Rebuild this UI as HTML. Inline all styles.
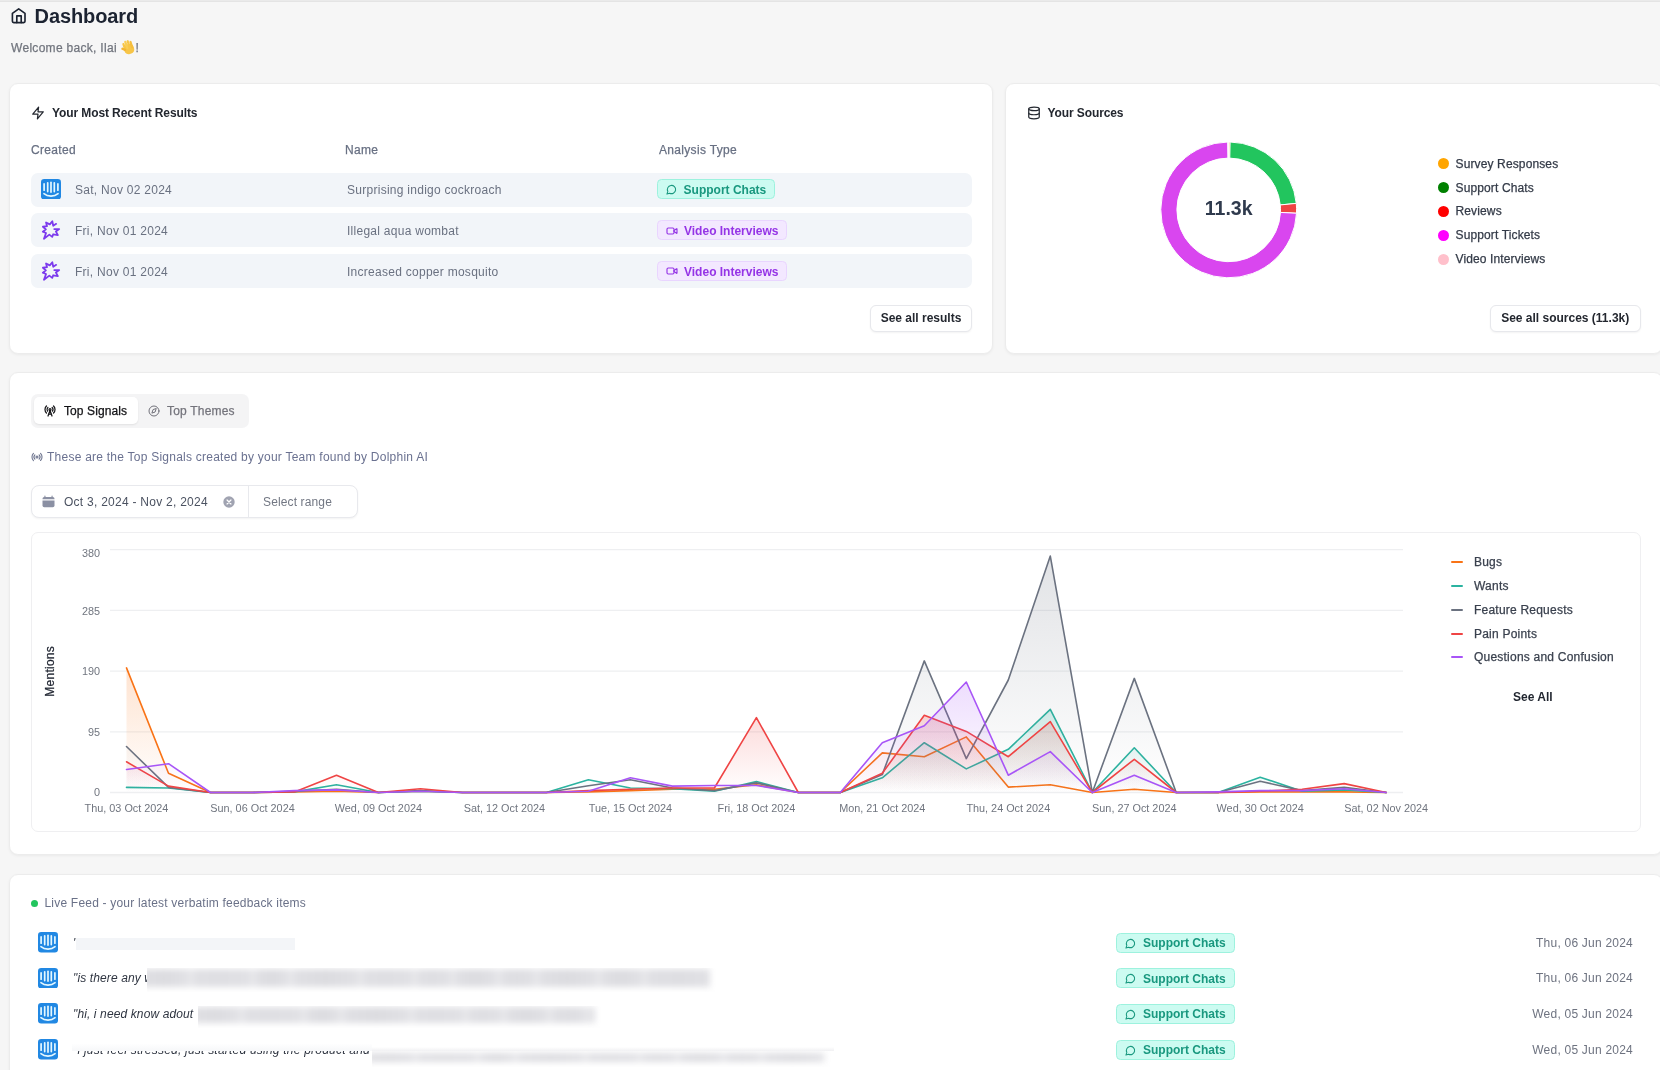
<!DOCTYPE html>
<html lang="en">
<head>
<meta charset="utf-8">
<title>Dashboard</title>
<style>
*{box-sizing:border-box;margin:0;padding:0}
html,body{width:1660px;height:1070px;overflow:hidden}
body{background:#f6f6f6;font-family:"Liberation Sans",Arial,sans-serif;font-size:12px;color:#374151;position:relative}
#app{position:absolute;left:0;top:0;width:1660px;height:1070px;overflow:hidden;will-change:transform}
.abs{position:absolute;white-space:nowrap}
.topline{position:absolute;left:0;top:0;width:1660px;height:1.800px;background:linear-gradient(#ededed,#e1e1e1)}
.card{position:absolute;background:#fff;border:1px solid #ececec;border-radius:9px;box-shadow:0 1px 3px rgba(0,0,0,.05)}
.med{-webkit-text-stroke:.25px currentColor}
.h1{left:34.600px;top:4px;font-size:20px;font-weight:700;color:#1c2331;letter-spacing:-.1px;line-height:24px}
.sub{left:11px;top:40px;font-size:12px;color:#71757e;letter-spacing:.3px;line-height:16px}
.ctitle{font-size:12px;font-weight:700;color:#23272f;line-height:16px;letter-spacing:-.1px}
.th{font-size:12px;color:#687083;line-height:16px;letter-spacing:.32px}
.row{position:absolute;left:20px;width:941px;height:34px;background:#f2f5f9;border-radius:7px}
.cell{position:absolute;top:9.1px;font-size:12px;line-height:16px;color:#6a7181;letter-spacing:.27px;white-space:nowrap}
.badge{position:absolute;height:20px;border-radius:4.5px;border:1px solid;font-weight:700;font-size:12px;line-height:18px;white-space:nowrap}
.badge span{position:absolute;left:26px;top:.6px}
.badge svg{position:absolute}
.b-teal{background:#ccfbf1;border-color:#9df2de;color:#19987f;width:118.500px}
.b-purple{background:#f3e8ff;border-color:#e9d5ff;color:#9534e6;width:130px}
.btn{position:absolute;height:27px;background:#fff;border:1px solid #e7e8ec;border-radius:6px;box-shadow:0 1px 2px rgba(0,0,0,.05);font-weight:700;font-size:12px;line-height:25px;color:#23272f;text-align:center;white-space:nowrap}
.leg{position:absolute;left:448.5px;font-size:12px;line-height:16px;color:#333a47;letter-spacing:.13px;white-space:nowrap}
.dot{position:absolute;left:431px;width:11px;height:11px;border-radius:50%}
.ftxt{font-size:12px;font-style:italic;line-height:16px;color:#2f3541;letter-spacing:.12px}
.fdate{font-size:12px;line-height:16px;color:#6e7380;letter-spacing:.22px;margin-top:.7px}
.blurbox{background:#fff;overflow:hidden}
.blurbox i{position:absolute;left:-5px;right:9px;top:1px;bottom:5px;filter:blur(3px);display:block}
.tk{font-family:"Liberation Sans",Arial,sans-serif;font-size:10.850px;fill:#70757f}
.yl{font-family:"Liberation Sans",Arial,sans-serif;font-size:12px;letter-spacing:.25px;fill:#1f2430;stroke:#1f2430;stroke-width:.25px}
</style>
</head>
<body>
<div id="app">
<div class="topline"></div>
<svg class="abs" style="left:10px;top:7px" width="18" height="18" viewBox="0 0 18 18" fill="none" stroke="#1c2331" stroke-width="1.650" stroke-linecap="round" stroke-linejoin="round"><path d="M2.400 6.400 8.700 1.900 15 6.400v7.900a1.300 1.300 0 0 1-1.300 1.300H3.700a1.300 1.300 0 0 1-1.300-1.300z"/><path d="M6.800 15.600V8.800h4.400v6.800"/></svg>
<div class="abs h1">Dashboard</div>
<div class="abs sub med">Welcome back, Ilai <span style="display:inline-block;width:15px"></span>!</div>
<svg class="abs" style="left:118.500px;top:37.800px" width="19" height="19" viewBox="0 0 17 17"><g transform="rotate(-18 8.500 9)"><rect x="4.200" y="5.500" width="9" height="9" rx="3.800" fill="#f7c548"/><rect x="4.300" y="3.200" width="2" height="7" rx="1" fill="#f7c548"/><rect x="6.500" y="1.800" width="2" height="8" rx="1" fill="#f9cd55"/><rect x="8.700" y="2" width="2" height="8" rx="1" fill="#f7c548"/><rect x="10.900" y="3.400" width="2" height="7" rx="1" fill="#f5bd3c"/><rect x="1.900" y="7.600" width="4.500" height="2.100" rx="1" transform="rotate(40 4 8.600)" fill="#f3b532"/></g></svg>
<div class="card" style="left:9px;top:83px;width:984px;height:270.500px"><div style="position:absolute;left:1px;top:1px">
<svg class="abs" style="left:20px;top:21px" width="14" height="14" viewBox="0 0 24 24" fill="none" stroke="#23272f" stroke-width="2.100" stroke-linecap="round" stroke-linejoin="round"><path d="M13 2 3 14h9l-1 8 10-12h-9z"/></svg>
<div class="abs ctitle" style="left:41px;top:20px">Your Most Recent Results</div>
<div class="abs th med" style="left:20px;top:57px">Created</div>
<div class="abs th med" style="left:334px;top:57px">Name</div>
<div class="abs th med" style="left:648px;top:57px">Analysis Type</div>
<div class="row" style="top:87.6px">
<svg class="abs" style="left:10px;top:6.3px" width="20" height="20.5" viewBox="0 0 20 20.5"><rect width="20" height="20.5" rx="3.2" fill="#2188e3"/><g stroke="#e4f8ff" stroke-width="1.7" stroke-linecap="round" fill="none"><path d="M3.1 4.9v6.300"/><path d="M6.700 3.800v8.800"/><path d="M10 3.300v9.800"/><path d="M13.300 3.800v8.800"/><path d="M16.900 4.900v6.300"/><path d="M2.900 14.700c3.900 3.200 10.300 3.200 14.200 0" stroke-width="1.600"/></g></svg>
<div class="cell" style="left:44px;top:9.4px">Sat, Nov 02 2024</div><div class="cell" style="left:316px;top:9.4px">Surprising indigo cockroach</div>
<div class="badge b-teal" style="left:625.600px;top:6.800px"><svg style="left:8px;top:4px" width="11" height="11" viewBox="0 0 24 24" fill="none" stroke="currentColor" stroke-width="2.3" stroke-linecap="round" stroke-linejoin="round"><path d="M7.900 20A9 9 0 1 0 4 16.100L2 22z"/></svg><span>Support Chats</span></div>
</div>
<div class="row" style="top:128.4px">
<svg class="abs" style="left:5px;top:1.6px" width="30" height="30" viewBox="0 0 30 30" fill="none" stroke="#7c3aed" stroke-width="1.800" stroke-linejoin="round" stroke-linecap="round"><path d="M20.21 8.86L17.23 10.72L16.3 6.26L13.79 9.42L10.07 7.47L11.0 11.19L6.91 11.74L9.88 14.35L6.82 16.67L10.07 17.98L7.93 23.74L13.33 19.65L16.21 21.88L17.23 19.28L21.88 20.12L19.84 16.39L23.18 14.07L18.25 14.07"/></svg>
<div class="cell" style="left:44px;top:9.6px">Fri, Nov 01 2024</div><div class="cell" style="left:316px;top:9.6px">Illegal aqua wombat</div>
<div class="badge b-purple" style="left:626px;top:6.800px"><svg style="left:7.5px;top:3.5px" width="12" height="12" viewBox="0 0 24 24" fill="none" stroke="currentColor" stroke-width="2.3" stroke-linecap="round" stroke-linejoin="round"><rect x="2" y="6" width="14" height="12" rx="2.500"/><path d="m16 13 5.200 3.600a.5.500 0 0 0 .8-.4V7.800a.5.500 0 0 0-.8-.4L16 11z"/></svg><span>Video Interviews</span></div>
</div>
<div class="row" style="top:169.2px">
<svg class="abs" style="left:5px;top:1.6px" width="30" height="30" viewBox="0 0 30 30" fill="none" stroke="#7c3aed" stroke-width="1.800" stroke-linejoin="round" stroke-linecap="round"><path d="M20.21 8.86L17.23 10.72L16.3 6.26L13.79 9.42L10.07 7.47L11.0 11.19L6.91 11.74L9.88 14.35L6.82 16.67L10.07 17.98L7.93 23.74L13.33 19.65L16.21 21.88L17.23 19.28L21.88 20.12L19.84 16.39L23.18 14.07L18.25 14.07"/></svg>
<div class="cell" style="left:44px;top:9.8px">Fri, Nov 01 2024</div><div class="cell" style="left:316px;top:9.8px">Increased copper mosquito</div>
<div class="badge b-purple" style="left:626px;top:6.800px"><svg style="left:7.5px;top:3.5px" width="12" height="12" viewBox="0 0 24 24" fill="none" stroke="currentColor" stroke-width="2.3" stroke-linecap="round" stroke-linejoin="round"><rect x="2" y="6" width="14" height="12" rx="2.500"/><path d="m16 13 5.200 3.600a.5.500 0 0 0 .8-.4V7.800a.5.500 0 0 0-.8-.4L16 11z"/></svg><span>Video Interviews</span></div>
</div>
<div class="btn" style="left:859px;top:220px;width:102px">See all results</div>
</div></div>
<div class="card" style="left:1005px;top:83px;width:657.500px;height:270.500px"><div style="position:absolute;left:1px;top:1px">
<svg class="abs" style="left:20px;top:21px" width="14" height="14" viewBox="0 0 24 24" fill="none" stroke="#23272f" stroke-width="2.100" stroke-linecap="round" stroke-linejoin="round"><ellipse cx="12" cy="5" rx="9" ry="3"/><path d="M3 5v14a9 3 0 0 0 18 0V5"/><path d="M3 12a9 3 0 0 0 18 0"/></svg>
<div class="abs ctitle" style="left:40.500px;top:20px">Your Sources</div>
<svg class="abs" style="left:0;top:0" width="400" height="267" viewBox="0 0 400 267"><path d="M221.70 57.00A67.9 67.9 0 0 1 223.12 57.01L222.78 73.11A51.8 51.8 0 0 0 221.70 73.10Z" fill="#f59e0b" stroke="#fff" stroke-width="1"/><path d="M223.12 57.01A67.9 67.9 0 0 1 289.29 118.39L273.26 119.94A51.8 51.8 0 0 0 222.78 73.11Z" fill="#22c55e" stroke="#fff" stroke-width="1"/><path d="M289.29 118.39A67.9 67.9 0 0 1 289.52 128.22L273.44 127.43A51.8 51.8 0 0 0 273.26 119.94Z" fill="#ef4444" stroke="#fff" stroke-width="1"/><path d="M289.52 128.22A67.9 67.9 0 1 1 220.87 57.01L221.07 73.10A51.8 51.8 0 1 0 273.44 127.43Z" fill="#d946ef" stroke="#fff" stroke-width="1"/><path d="M220.87 57.01A67.9 67.9 0 0 1 221.70 57.00L221.70 73.10A51.8 51.8 0 0 0 221.07 73.10Z" fill="#f9a8d4" stroke="#fff" stroke-width="1"/><text x="221.70000000000005" y="129.5" text-anchor="middle" font-family="Liberation Sans, Arial, sans-serif" font-size="19.5" font-weight="700" fill="#2f3a4d">11.3k</text></svg>
<div class="dot" style="top:73.2px;background:#ffa500"></div><div class="leg med" style="top:70.7px">Survey Responses</div>
<div class="dot" style="top:97.0px;background:#008000"></div><div class="leg med" style="top:94.5px">Support Chats</div>
<div class="dot" style="top:120.9px;background:#ff0000"></div><div class="leg med" style="top:118.4px">Reviews</div>
<div class="dot" style="top:144.8px;background:#ff00ff"></div><div class="leg med" style="top:142.2px">Support Tickets</div>
<div class="dot" style="top:168.6px;background:#ffc0cb"></div><div class="leg med" style="top:166.1px">Video Interviews</div>
<div class="btn" style="left:482.700px;top:219.800px;width:151px">See all sources (11.3k)</div>
</div></div>
<div class="card" style="left:9px;top:372px;width:1653.500px;height:482.500px">
<div class="abs" style="left:21px;top:21px;width:218px;height:34px;background:#f4f4f5;border-radius:7px"></div>
<div class="abs" style="left:24px;top:24px;width:104px;height:27px;background:#fff;border-radius:5px;box-shadow:0 1px 2px rgba(0,0,0,.08)"></div>
<svg class="abs" style="left:34.3px;top:31.6px" width="12" height="12" viewBox="0 0 24 24" fill="none" stroke="#18181b" stroke-width="2.500" stroke-linecap="round" stroke-linejoin="round"><path d="M4.900 16.100C1 12.200 1 5.800 4.900 1.900"/><path d="M7.800 4.700a6.140 6.140 0 0 0-.8 7.500"/><circle cx="12" cy="9" r="2"/><path d="M16.200 4.800c2 2 2.260 5.110.8 7.470"/><path d="M19.100 1.900a9.960 9.960 0 0 1 0 14.100"/><path d="M9.500 18h5"/><path d="m8 22 4-11 4 11"/></svg>
<div class="abs med" style="left:54px;top:30px;line-height:16px;color:#111114;letter-spacing:.1px">Top Signals</div>
<svg class="abs" style="left:138.2px;top:31.6px" width="12" height="12" viewBox="0 0 24 24" fill="none" stroke="#71717a" stroke-width="2" stroke-linecap="round" stroke-linejoin="round"><circle cx="12" cy="12" r="10"/><path d="m16.240 7.760-2.120 6.360-6.360 2.120 2.120-6.360z"/></svg>
<div class="abs med" style="left:157px;top:30px;line-height:16px;color:#74747c;letter-spacing:.2px">Top Themes</div>
<svg class="abs" style="left:21px;top:78px" width="12" height="12" viewBox="0 0 24 24" fill="none" stroke="#6f7690" stroke-width="2.200" stroke-linecap="round" stroke-linejoin="round"><path d="M4.900 19.100C1 15.200 1 8.800 4.900 4.900"/><path d="M7.800 16.200c-2.300-2.300-2.300-6.100 0-8.500"/><circle cx="12" cy="12" r="2"/><path d="M16.200 7.800c2.300 2.300 2.300 6.100 0 8.500"/><path d="M19.100 4.900C23 8.800 23 15.100 19.100 19"/></svg>
<div class="abs" style="left:37px;top:76px;line-height:16px;color:#6a7190;letter-spacing:.24px">These are the Top Signals created by your Team found by Dolphin AI</div>
<div class="abs" style="left:21px;top:112px;width:327px;height:33px;background:#fff;border:1px solid #e8e9ed;border-radius:8px;box-shadow:0 1px 2px rgba(0,0,0,.05)"></div>
<div class="abs" style="left:238px;top:113px;width:1px;height:31px;background:#e8e9ed"></div>
<svg class="abs" style="left:31px;top:121px" width="15" height="15" viewBox="0 0 20 20" fill="#8b90a3"><path d="M5.250 2a.75.750 0 0 1 .75.750V4h8V2.750a.75.750 0 0 1 1.500 0V4h.250A2.250 2.250 0 0 1 18 6.250V7H2v-.75A2.250 2.250 0 0 1 4.250 4h.250V2.750A.75.750 0 0 1 5.250 2z"/><path d="M2 8.500h16v6.750A2.250 2.250 0 0 1 15.750 17.500H4.250A2.250 2.250 0 0 1 2 15.250z"/></svg>
<div class="abs" style="left:54px;top:121px;line-height:16px;color:#4b5261;letter-spacing:.26px">Oct 3, 2024 - Nov 2, 2024</div>
<svg class="abs" style="left:213px;top:123px" width="12" height="12" viewBox="0 0 20 20"><circle cx="10" cy="10" r="9.500" fill="#a0a3b1"/><path d="M6.800 6.800 13.200 13.200M13.200 6.800 6.800 13.200" stroke="#fff" stroke-width="2.200" stroke-linecap="round"/></svg>
<div class="abs" style="left:253px;top:121px;line-height:16px;color:#727783;letter-spacing:.13px">Select range</div>
<div class="abs" style="left:21px;top:159px;width:1610px;height:300px;border:1px solid #efeff1;border-radius:7px"></div>
<svg class="abs" style="left:21px;top:159px" width="1610" height="300" viewBox="0 0 1610 300"><defs>
<linearGradient id="g-bugs" x1="0" y1="0" x2="0" y2="1"><stop offset="0" stop-color="#f97316" stop-opacity=".2"/><stop offset="1" stop-color="#f97316" stop-opacity="0"/></linearGradient>
<linearGradient id="g-wants" x1="0" y1="0" x2="0" y2="1"><stop offset="0" stop-color="#2bb3a0" stop-opacity=".2"/><stop offset="1" stop-color="#2bb3a0" stop-opacity="0"/></linearGradient>
<linearGradient id="g-feat" x1="0" y1="0" x2="0" y2="1"><stop offset="0" stop-color="#6b7280" stop-opacity=".2"/><stop offset="1" stop-color="#6b7280" stop-opacity="0"/></linearGradient>
<linearGradient id="g-pain" x1="0" y1="0" x2="0" y2="1"><stop offset="0" stop-color="#ef4444" stop-opacity=".2"/><stop offset="1" stop-color="#ef4444" stop-opacity="0"/></linearGradient>
<linearGradient id="g-quest" x1="0" y1="0" x2="0" y2="1"><stop offset="0" stop-color="#a855f7" stop-opacity=".2"/><stop offset="1" stop-color="#a855f7" stop-opacity="0"/></linearGradient>
</defs>
<line x1="79" x2="1372" y1="260.5" y2="260.5" stroke="#eeeff1" stroke-width="1.300"/>
<line x1="79" x2="1372" y1="199.8" y2="199.8" stroke="#eeeff1" stroke-width="1.300"/>
<line x1="79" x2="1372" y1="139.1" y2="139.1" stroke="#eeeff1" stroke-width="1.300"/>
<line x1="79" x2="1372" y1="78.4" y2="78.4" stroke="#eeeff1" stroke-width="1.300"/>
<line x1="79" x2="1372" y1="17.7" y2="17.7" stroke="#eeeff1" stroke-width="1.300"/>
<path d="M95.5 135.9 L137.5 241.3 L179.5 260.5 L221.5 260.5 L263.5 259.9 L305.5 259.2 L347.4 260.5 L389.4 259.2 L431.4 260.5 L473.4 260.5 L515.4 260.5 L557.4 259.9 L599.4 258.6 L641.4 257.3 L683.4 257.3 L725.4 252.8 L767.3 260.5 L809.3 260.5 L851.3 220.9 L893.3 224.7 L935.3 204.9 L977.3 255.1 L1019.3 252.8 L1061.3 260.5 L1103.3 257.3 L1145.2 260.5 L1187.2 260.5 L1229.2 259.9 L1271.2 259.9 L1313.2 259.9 L1355.2 260.5 L1355.2 260.5 L95.5 260.5Z" fill="url(#g-bugs)"/>
<path d="M95.5 135.9 L137.5 241.3 L179.5 260.5 L221.5 260.5 L263.5 259.9 L305.5 259.2 L347.4 260.5 L389.4 259.2 L431.4 260.5 L473.4 260.5 L515.4 260.5 L557.4 259.9 L599.4 258.6 L641.4 257.3 L683.4 257.3 L725.4 252.8 L767.3 260.5 L809.3 260.5 L851.3 220.9 L893.3 224.7 L935.3 204.9 L977.3 255.1 L1019.3 252.8 L1061.3 260.5 L1103.3 257.3 L1145.2 260.5 L1187.2 260.5 L1229.2 259.9 L1271.2 259.9 L1313.2 259.9 L1355.2 260.5" fill="none" stroke="#f97316" stroke-width="1.600" stroke-linejoin="round" stroke-linecap="round"/>
<path d="M95.5 255.4 L137.5 256.0 L179.5 260.5 L221.5 260.5 L263.5 259.9 L305.5 252.8 L347.4 260.5 L389.4 259.2 L431.4 260.5 L473.4 260.5 L515.4 260.5 L557.4 247.7 L599.4 256.0 L641.4 256.7 L683.4 259.2 L725.4 249.6 L767.3 260.5 L809.3 260.5 L851.3 245.8 L893.3 210.7 L935.3 236.9 L977.3 217.3 L1019.3 177.4 L1061.3 260.5 L1103.3 215.8 L1145.2 260.5 L1187.2 260.5 L1229.2 245.2 L1271.2 259.2 L1313.2 257.9 L1355.2 260.5 L1355.2 260.5 L95.5 260.5Z" fill="url(#g-wants)"/>
<path d="M95.5 255.4 L137.5 256.0 L179.5 260.5 L221.5 260.5 L263.5 259.9 L305.5 252.8 L347.4 260.5 L389.4 259.2 L431.4 260.5 L473.4 260.5 L515.4 260.5 L557.4 247.7 L599.4 256.0 L641.4 256.7 L683.4 259.2 L725.4 249.6 L767.3 260.5 L809.3 260.5 L851.3 245.8 L893.3 210.7 L935.3 236.9 L977.3 217.3 L1019.3 177.4 L1061.3 260.5 L1103.3 215.8 L1145.2 260.5 L1187.2 260.5 L1229.2 245.2 L1271.2 259.2 L1313.2 257.9 L1355.2 260.5" fill="none" stroke="#2bb3a0" stroke-width="1.600" stroke-linejoin="round" stroke-linecap="round"/>
<path d="M95.5 214.5 L137.5 255.4 L179.5 260.5 L221.5 260.5 L263.5 259.2 L305.5 257.3 L347.4 260.5 L389.4 258.6 L431.4 260.5 L473.4 260.5 L515.4 260.5 L557.4 253.7 L599.4 247.7 L641.4 256.0 L683.4 258.6 L725.4 250.9 L767.3 260.5 L809.3 260.5 L851.3 242.6 L893.3 128.9 L935.3 226.6 L977.3 148.0 L1019.3 24.1 L1061.3 260.5 L1103.3 146.4 L1145.2 260.5 L1187.2 260.5 L1229.2 249.3 L1271.2 258.6 L1313.2 255.4 L1355.2 260.5 L1355.2 260.5 L95.5 260.5Z" fill="url(#g-feat)"/>
<path d="M95.5 214.5 L137.5 255.4 L179.5 260.5 L221.5 260.5 L263.5 259.2 L305.5 257.3 L347.4 260.5 L389.4 258.6 L431.4 260.5 L473.4 260.5 L515.4 260.5 L557.4 253.7 L599.4 247.7 L641.4 256.0 L683.4 258.6 L725.4 250.9 L767.3 260.5 L809.3 260.5 L851.3 242.6 L893.3 128.9 L935.3 226.6 L977.3 148.0 L1019.3 24.1 L1061.3 260.5 L1103.3 146.4 L1145.2 260.5 L1187.2 260.5 L1229.2 249.3 L1271.2 258.6 L1313.2 255.4 L1355.2 260.5" fill="none" stroke="#6b7280" stroke-width="1.600" stroke-linejoin="round" stroke-linecap="round"/>
<path d="M95.5 229.8 L137.5 254.1 L179.5 260.5 L221.5 260.5 L263.5 259.9 L305.5 243.2 L347.4 260.5 L389.4 256.7 L431.4 260.5 L473.4 260.5 L515.4 260.5 L557.4 258.6 L599.4 257.3 L641.4 256.0 L683.4 256.0 L725.4 185.7 L767.3 260.5 L809.3 260.5 L851.3 241.3 L893.3 183.2 L935.3 199.4 L977.3 224.7 L1019.3 189.6 L1061.3 260.5 L1103.3 227.3 L1145.2 260.5 L1187.2 260.5 L1229.2 259.2 L1271.2 257.3 L1313.2 251.6 L1355.2 260.5 L1355.2 260.5 L95.5 260.5Z" fill="url(#g-pain)"/>
<path d="M95.5 229.8 L137.5 254.1 L179.5 260.5 L221.5 260.5 L263.5 259.9 L305.5 243.2 L347.4 260.5 L389.4 256.7 L431.4 260.5 L473.4 260.5 L515.4 260.5 L557.4 258.6 L599.4 257.3 L641.4 256.0 L683.4 256.0 L725.4 185.7 L767.3 260.5 L809.3 260.5 L851.3 241.3 L893.3 183.2 L935.3 199.4 L977.3 224.7 L1019.3 189.6 L1061.3 260.5 L1103.3 227.3 L1145.2 260.5 L1187.2 260.5 L1229.2 259.2 L1271.2 257.3 L1313.2 251.6 L1355.2 260.5" fill="none" stroke="#ef4444" stroke-width="1.600" stroke-linejoin="round" stroke-linecap="round"/>
<path d="M95.5 237.5 L137.5 231.7 L179.5 260.5 L221.5 260.5 L263.5 258.6 L305.5 257.9 L347.4 260.5 L389.4 259.2 L431.4 260.5 L473.4 260.5 L515.4 260.5 L557.4 259.2 L599.4 245.8 L641.4 254.1 L683.4 253.5 L725.4 253.5 L767.3 260.5 L809.3 260.5 L851.3 210.7 L893.3 193.7 L935.3 150.0 L977.3 243.2 L1019.3 219.6 L1061.3 260.5 L1103.3 243.2 L1145.2 260.5 L1187.2 259.9 L1229.2 258.6 L1271.2 258.6 L1313.2 256.7 L1355.2 260.5 L1355.2 260.5 L95.5 260.5Z" fill="url(#g-quest)"/>
<path d="M95.5 237.5 L137.5 231.7 L179.5 260.5 L221.5 260.5 L263.5 258.6 L305.5 257.9 L347.4 260.5 L389.4 259.2 L431.4 260.5 L473.4 260.5 L515.4 260.5 L557.4 259.2 L599.4 245.8 L641.4 254.1 L683.4 253.5 L725.4 253.5 L767.3 260.5 L809.3 260.5 L851.3 210.7 L893.3 193.7 L935.3 150.0 L977.3 243.2 L1019.3 219.6 L1061.3 260.5 L1103.3 243.2 L1145.2 260.5 L1187.2 259.9 L1229.2 258.6 L1271.2 258.6 L1313.2 256.7 L1355.2 260.5" fill="none" stroke="#a855f7" stroke-width="1.600" stroke-linejoin="round" stroke-linecap="round"/>
<text x="69" y="24.8" text-anchor="end" class="tk">380</text>
<text x="69" y="82.8" text-anchor="end" class="tk">285</text>
<text x="69" y="142.8" text-anchor="end" class="tk">190</text>
<text x="69" y="203.8" text-anchor="end" class="tk">95</text>
<text x="69" y="263.8" text-anchor="end" class="tk">0</text>
<text x="95.5" y="279.8" text-anchor="middle" class="tk">Thu, 03 Oct 2024</text>
<text x="221.5" y="279.8" text-anchor="middle" class="tk">Sun, 06 Oct 2024</text>
<text x="347.4" y="279.8" text-anchor="middle" class="tk">Wed, 09 Oct 2024</text>
<text x="473.4" y="279.8" text-anchor="middle" class="tk">Sat, 12 Oct 2024</text>
<text x="599.4" y="279.8" text-anchor="middle" class="tk">Tue, 15 Oct 2024</text>
<text x="725.4" y="279.8" text-anchor="middle" class="tk">Fri, 18 Oct 2024</text>
<text x="851.3" y="279.8" text-anchor="middle" class="tk">Mon, 21 Oct 2024</text>
<text x="977.3" y="279.8" text-anchor="middle" class="tk">Thu, 24 Oct 2024</text>
<text x="1103.3" y="279.8" text-anchor="middle" class="tk">Sun, 27 Oct 2024</text>
<text x="1229.2" y="279.8" text-anchor="middle" class="tk">Wed, 30 Oct 2024</text>
<text x="1355.2" y="279.8" text-anchor="middle" class="tk">Sat, 02 Nov 2024</text>
<text transform="translate(22.599999999999998 139.29999999999995) rotate(-90)" text-anchor="middle" class="yl">Mentions</text></svg>
<div class="abs" style="left:1440.5px;top:188px;width:12px;height:2px;border-radius:1px;background:#f97316"></div><div class="abs med" style="left:1464px;top:181px;line-height:16px;color:#3a414e;letter-spacing:.22px">Bugs</div>
<div class="abs" style="left:1440.5px;top:211.8px;width:12px;height:2px;border-radius:1px;background:#2bb3a0"></div><div class="abs med" style="left:1464px;top:204.8px;line-height:16px;color:#3a414e;letter-spacing:.22px">Wants</div>
<div class="abs" style="left:1440.5px;top:235.6px;width:12px;height:2px;border-radius:1px;background:#6b7280"></div><div class="abs med" style="left:1464px;top:228.6px;line-height:16px;color:#3a414e;letter-spacing:.22px">Feature Requests</div>
<div class="abs" style="left:1440.5px;top:259.5px;width:12px;height:2px;border-radius:1px;background:#ef4444"></div><div class="abs med" style="left:1464px;top:252.5px;line-height:16px;color:#3a414e;letter-spacing:.22px">Pain Points</div>
<div class="abs" style="left:1440.5px;top:283.3px;width:12px;height:2px;border-radius:1px;background:#a855f7"></div><div class="abs med" style="left:1464px;top:276.3px;line-height:16px;color:#3a414e;letter-spacing:.22px">Questions and Confusion</div>
<div class="abs" style="left:1503px;top:315.5px;line-height:16px;font-weight:700;color:#1f242e">See All</div>
</div>
<div class="card" style="left:9px;top:873.500px;width:1653.500px;height:230px">
<div class="abs" style="left:20.5px;top:25.0px;width:7px;height:7px;border-radius:50%;background:#22c55e"></div>
<div class="abs" style="left:34.5px;top:20.5px;line-height:16px;color:#6a7188;letter-spacing:.2px">Live Feed - your latest verbatim feedback items</div>
<svg class="abs" style="left:27.9px;top:57.5px" width="20" height="20.5" viewBox="0 0 20 20.5"><rect width="20" height="20.5" rx="3.2" fill="#2188e3"/><g stroke="#e4f8ff" stroke-width="1.7" stroke-linecap="round" fill="none"><path d="M3.1 4.9v6.300"/><path d="M6.700 3.800v8.800"/><path d="M10 3.300v9.800"/><path d="M13.300 3.800v8.800"/><path d="M16.900 4.900v6.300"/><path d="M2.900 14.700c3.900 3.200 10.300 3.200 14.200 0" stroke-width="1.600"/></g></svg>
<div class="abs ftxt" style="left:63px;top:60.0px">"</div>
<div class="abs" style="left:65.5px;top:63.7px;width:219px;height:12.300px;background:#f3f5f8"></div>
<div class="badge b-teal" style="left:1106px;top:58.0px"><svg style="left:8px;top:4px" width="11" height="11" viewBox="0 0 24 24" fill="none" stroke="currentColor" stroke-width="2.3" stroke-linecap="round" stroke-linejoin="round"><path d="M7.900 20A9 9 0 1 0 4 16.100L2 22z"/></svg><span>Support Chats</span></div>
<div class="abs fdate" style="right:28.5px;top:59.5px">Thu, 06 Jun 2024</div>
<svg class="abs" style="left:27.9px;top:93.1px" width="20" height="20.5" viewBox="0 0 20 20.5"><rect width="20" height="20.5" rx="3.2" fill="#2188e3"/><g stroke="#e4f8ff" stroke-width="1.7" stroke-linecap="round" fill="none"><path d="M3.1 4.9v6.300"/><path d="M6.700 3.800v8.800"/><path d="M10 3.300v9.800"/><path d="M13.300 3.800v8.800"/><path d="M16.900 4.900v6.300"/><path d="M2.900 14.700c3.900 3.200 10.300 3.200 14.200 0" stroke-width="1.600"/></g></svg>
<div class="abs ftxt" style="left:63px;top:95.6px">"is there any w</div>
<div class="abs blurbox" style="left:137.3px;top:93.3px;width:571.7px;height:24.7px"><i style="top:1px;background:linear-gradient(90deg,#e0e0e4 0px,#dcdce0 22px,#e1e1e5 44px,#e9e9ec 49px,#e0e0e4 54px,#dfdfe3 80px,#e1e1e5 106px,#e9e9ec 111px,#e0e0e4 116px,#dcdce0 130px,#e1e1e5 144px,#e9e9ec 149px,#e0e0e4 154px,#dcdce0 184px,#e1e1e5 214px,#e9e9ec 219px,#e0e0e4 224px,#dfdfe3 246px,#e1e1e5 268px,#e9e9ec 273px,#e0e0e4 278px,#dfdfe3 292px,#e1e1e5 306px,#e9e9ec 311px,#e0e0e4 316px,#dcdce0 334px,#e1e1e5 352px,#e9e9ec 357px,#e0e0e4 362px,#dedee2 376px,#e1e1e5 390px,#e9e9ec 395px,#e0e0e4 400px,#dcdce0 426px,#e1e1e5 452px,#e9e9ec 457px,#e0e0e4 462px,#dcdce0 480px,#e1e1e5 498px,#e9e9ec 503px,#e0e0e4 508px,#dedee2 538px,#e1e1e5 568px,#e9e9ec 573px,#e0e0e4 578px,#dfdfe3 592px,#e1e1e5 606px,#e9e9ec 611px,#e0e0e4 616px,#dcdce0 630px,#e1e1e5 644px,#e9e9ec 649px,#e0e0e4 654px,#dfdfe3 671px,#e1e1e5 688px,#e9e9ec 693px,#e0e0e4 698px,#dcdce0 728px,#e1e1e5 758px,#e9e9ec 763px)"></i></div>
<div class="badge b-teal" style="left:1106px;top:93.6px"><svg style="left:8px;top:4px" width="11" height="11" viewBox="0 0 24 24" fill="none" stroke="currentColor" stroke-width="2.3" stroke-linecap="round" stroke-linejoin="round"><path d="M7.900 20A9 9 0 1 0 4 16.100L2 22z"/></svg><span>Support Chats</span></div>
<div class="abs fdate" style="right:28.5px;top:95.1px">Thu, 06 Jun 2024</div>
<svg class="abs" style="left:27.9px;top:128.9px" width="20" height="20.5" viewBox="0 0 20 20.5"><rect width="20" height="20.5" rx="3.2" fill="#2188e3"/><g stroke="#e4f8ff" stroke-width="1.7" stroke-linecap="round" fill="none"><path d="M3.1 4.9v6.300"/><path d="M6.700 3.800v8.800"/><path d="M10 3.300v9.800"/><path d="M13.300 3.800v8.800"/><path d="M16.900 4.900v6.300"/><path d="M2.900 14.700c3.900 3.200 10.300 3.200 14.200 0" stroke-width="1.600"/></g></svg>
<div class="abs ftxt" style="left:63px;top:131.4px">"hi, i need know adout</div>
<div class="abs blurbox" style="left:188px;top:131.0px;width:405.5px;height:22.5px"><i style="top:1px;background:linear-gradient(90deg,#e0e0e4 0px,#dcdce0 22px,#e1e1e5 44px,#e9e9ec 49px,#e0e0e4 54px,#dfdfe3 80px,#e1e1e5 106px,#e9e9ec 111px,#e0e0e4 116px,#dcdce0 130px,#e1e1e5 144px,#e9e9ec 149px,#e0e0e4 154px,#dcdce0 184px,#e1e1e5 214px,#e9e9ec 219px,#e0e0e4 224px,#dfdfe3 246px,#e1e1e5 268px,#e9e9ec 273px,#e0e0e4 278px,#dfdfe3 292px,#e1e1e5 306px,#e9e9ec 311px,#e0e0e4 316px,#dcdce0 334px,#e1e1e5 352px,#e9e9ec 357px,#e0e0e4 362px,#dedee2 376px,#e1e1e5 390px,#e9e9ec 395px,#e0e0e4 400px,#dcdce0 426px,#e1e1e5 452px,#e9e9ec 457px,#e0e0e4 462px,#dcdce0 480px,#e1e1e5 498px,#e9e9ec 503px,#e0e0e4 508px,#dedee2 538px,#e1e1e5 568px,#e9e9ec 573px,#e0e0e4 578px,#dfdfe3 592px,#e1e1e5 606px,#e9e9ec 611px,#e0e0e4 616px,#dcdce0 630px,#e1e1e5 644px,#e9e9ec 649px,#e0e0e4 654px,#dfdfe3 671px,#e1e1e5 688px,#e9e9ec 693px,#e0e0e4 698px,#dcdce0 728px,#e1e1e5 758px,#e9e9ec 763px)"></i></div>
<div class="badge b-teal" style="left:1106px;top:129.4px"><svg style="left:8px;top:4px" width="11" height="11" viewBox="0 0 24 24" fill="none" stroke="currentColor" stroke-width="2.3" stroke-linecap="round" stroke-linejoin="round"><path d="M7.900 20A9 9 0 1 0 4 16.100L2 22z"/></svg><span>Support Chats</span></div>
<div class="abs fdate" style="right:28.5px;top:130.9px">Wed, 05 Jun 2024</div>
<svg class="abs" style="left:27.9px;top:164.6px" width="20" height="20.5" viewBox="0 0 20 20.5"><rect width="20" height="20.5" rx="3.2" fill="#2188e3"/><g stroke="#e4f8ff" stroke-width="1.7" stroke-linecap="round" fill="none"><path d="M3.1 4.9v6.300"/><path d="M6.700 3.800v8.800"/><path d="M10 3.300v9.800"/><path d="M13.300 3.800v8.800"/><path d="M16.900 4.900v6.300"/><path d="M2.900 14.700c3.900 3.200 10.300 3.200 14.200 0" stroke-width="1.600"/></g></svg>
<div class="abs ftxt" style="left:63px;top:167.1px;letter-spacing:.22px">"i just feel stressed, just started using the product and</div>
<div class="abs" style="left:62px;top:165.5px;width:300px;height:10.600px;background:linear-gradient(#fff 30%,#f6f7f9)"></div>
<div class="abs blurbox" style="left:361.5px;top:167.0px;width:462.5px;height:25.5px"><i style="top:11px;background:linear-gradient(90deg,#e0e0e4 0px,#dcdce0 22px,#e1e1e5 44px,#e9e9ec 49px,#e0e0e4 54px,#dfdfe3 80px,#e1e1e5 106px,#e9e9ec 111px,#e0e0e4 116px,#dcdce0 130px,#e1e1e5 144px,#e9e9ec 149px,#e0e0e4 154px,#dcdce0 184px,#e1e1e5 214px,#e9e9ec 219px,#e0e0e4 224px,#dfdfe3 246px,#e1e1e5 268px,#e9e9ec 273px,#e0e0e4 278px,#dfdfe3 292px,#e1e1e5 306px,#e9e9ec 311px,#e0e0e4 316px,#dcdce0 334px,#e1e1e5 352px,#e9e9ec 357px,#e0e0e4 362px,#dedee2 376px,#e1e1e5 390px,#e9e9ec 395px,#e0e0e4 400px,#dcdce0 426px,#e1e1e5 452px,#e9e9ec 457px,#e0e0e4 462px,#dcdce0 480px,#e1e1e5 498px,#e9e9ec 503px,#e0e0e4 508px,#dedee2 538px,#e1e1e5 568px,#e9e9ec 573px,#e0e0e4 578px,#dfdfe3 592px,#e1e1e5 606px,#e9e9ec 611px,#e0e0e4 616px,#dcdce0 630px,#e1e1e5 644px,#e9e9ec 649px,#e0e0e4 654px,#dfdfe3 671px,#e1e1e5 688px,#e9e9ec 693px,#e0e0e4 698px,#dcdce0 728px,#e1e1e5 758px,#e9e9ec 763px)"></i><b style="position:absolute;left:0;right:0;top:0;height:9px;background:linear-gradient(#fff 55%,#f1f1f3);display:block"></b></div>
<div class="badge b-teal" style="left:1106px;top:165.1px"><svg style="left:8px;top:4px" width="11" height="11" viewBox="0 0 24 24" fill="none" stroke="currentColor" stroke-width="2.3" stroke-linecap="round" stroke-linejoin="round"><path d="M7.900 20A9 9 0 1 0 4 16.100L2 22z"/></svg><span>Support Chats</span></div>
<div class="abs fdate" style="right:28.5px;top:166.6px">Wed, 05 Jun 2024</div>
</div>
</div>
</body>
</html>
